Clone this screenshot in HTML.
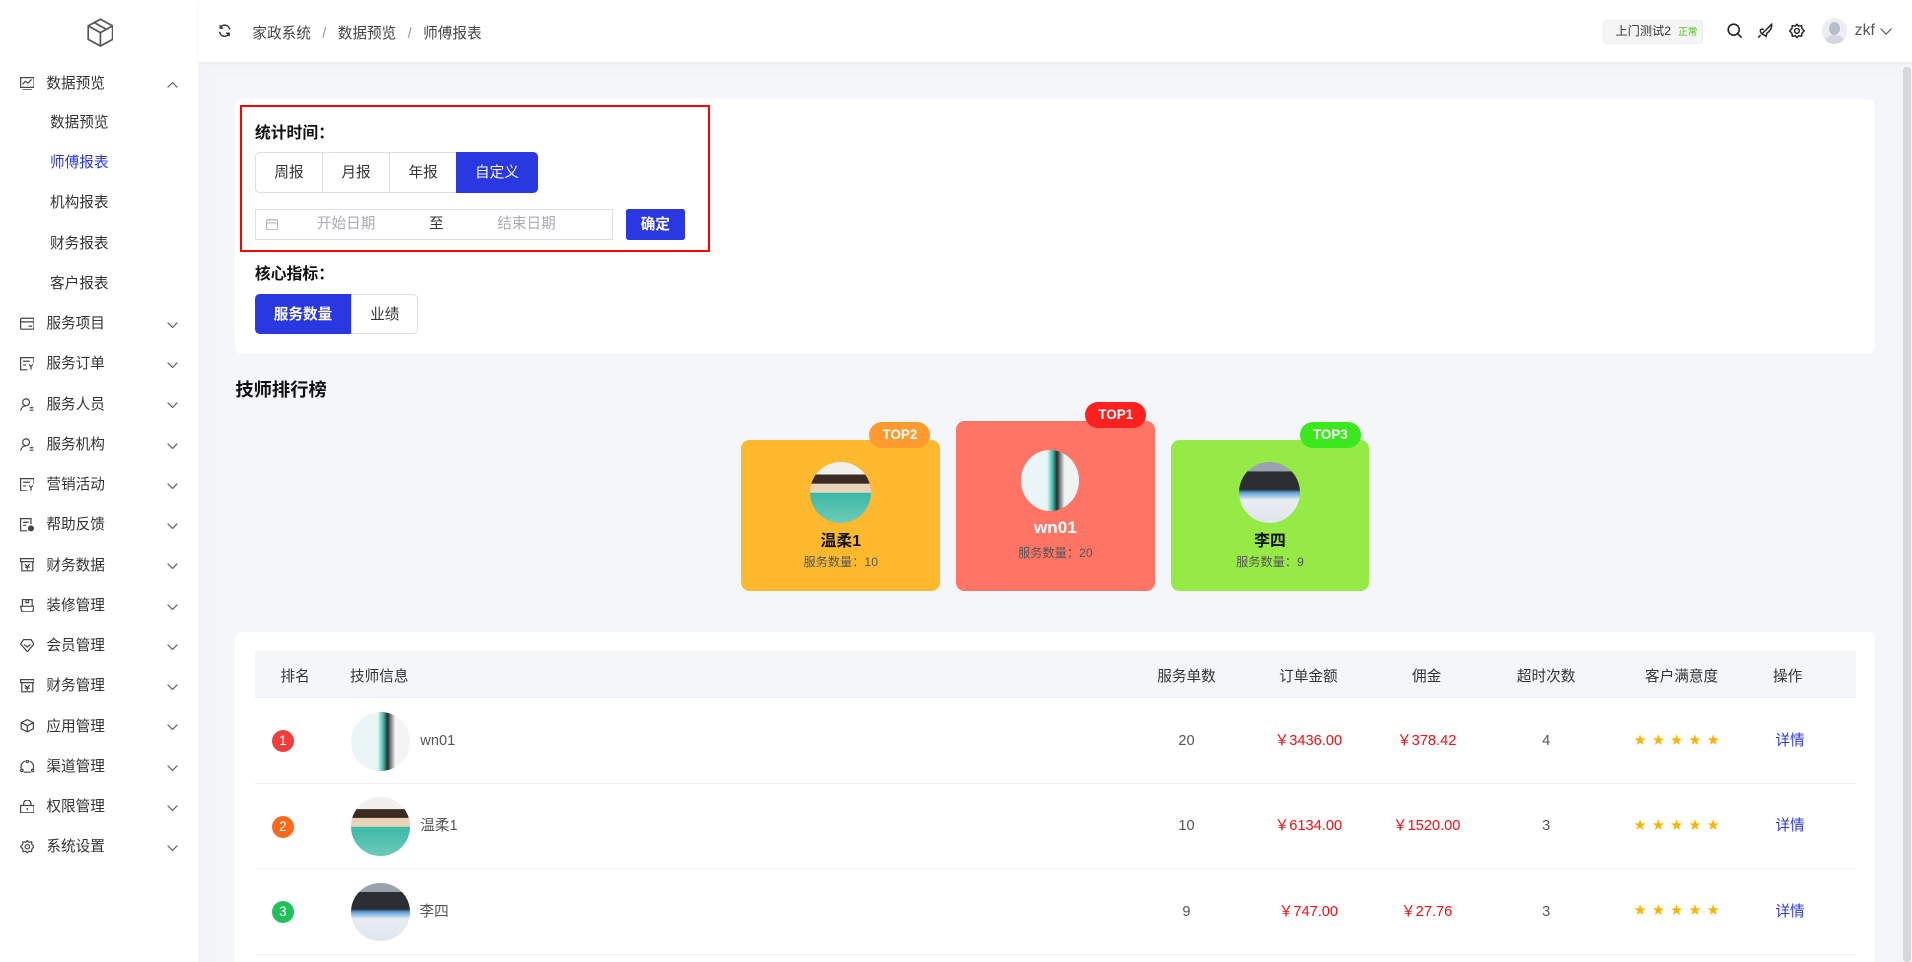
<!DOCTYPE html>
<html><head><meta charset="utf-8"><style>
html,body{margin:0;padding:0;}
html{width:1912px;height:962px;overflow:hidden;background:#f3f4f7;}
body{zoom:1.21939;width:1568px;height:789px;position:relative;font-family:"Liberation Sans","Noto Sans CJK SC",sans-serif;color:#333;font-size:13px;overflow:hidden;}
.a{position:absolute;}
.side{left:0;top:0;width:163px;height:789px;background:#fff;border-right:1px solid #eceef2;}
.mi{position:absolute;left:0;width:163px;height:20px;line-height:20px;font-size:12px;color:#333;}
.mi .ic{position:absolute;left:16px;top:4px;width:12px;height:11px;}
.mi .t{position:absolute;left:38px;}
.mi .ch{position:absolute;left:137px;top:8px;width:9px;height:5px;}
.sub{position:absolute;left:41px;font-size:12px;color:#333;line-height:20px;}
.hdr{left:163px;top:0;width:1405px;height:51px;background:#fff;box-shadow:0 1px 3px rgba(0,0,0,.06);}
.card{background:#fff;border-radius:6px;}
.btn{position:absolute;height:33px;line-height:33px;text-align:center;font-size:12px;border:1px solid #dcdfe6;box-sizing:border-box;background:#fff;color:#333;}
.blue{background:#2938e0;color:#fff;border-color:#2938e0;}
.rk{position:absolute;width:163px;border-radius:7px;text-align:center;}
.badge{position:absolute;width:50px;height:21px;border-radius:11px;color:#fff;font-size:11px;font-weight:bold;line-height:21px;text-align:center;}
.av{position:absolute;width:50px;height:50px;border-radius:50%;left:56px;overflow:hidden;}
.th{position:absolute;top:545px;font-size:12px;color:#333;transform:translateX(-50%);}
.td{position:absolute;font-size:12px;line-height:14px;height:14px;transform:translateX(-50%);white-space:nowrap;}
.red{color:#f20f0f;}
.num{position:absolute;left:223px;width:18px;height:18px;border-radius:50%;color:#fff;font-size:11px;line-height:18px;text-align:center;}
.tav{position:absolute;left:288px;width:48px;height:48px;border-radius:50%;overflow:hidden;}
.sep{position:absolute;left:209px;width:1313px;height:1px;background:#ebeef5;}
.stars{position:absolute;left:1340px;color:#f7b500;font-size:10px;line-height:14px;letter-spacing:5px;}
</style></head><body>
<div class="a side">
 <svg class="a" style="left:71px;top:15px" width="22" height="24" viewBox="0 0 22 24" fill="none" stroke="#555" stroke-width="1.4"><path d="M11 1 L21 6.5 V17.5 L11 23 L1 17.5 V6.5 Z M1 6.5 L11 12 L21 6.5 M11 12 V23 M6 3.8 L16 9.3"/></svg>
 <div class="mi" style="top:59px"><svg class="ic" viewBox="0 0 12 11" fill="none" stroke="#444"><rect x=".5" y=".5" width="11" height="8"/><path d="M2 6 L4.5 3.5 L6.5 5 L9.5 2 M2 10.5 H10"/></svg><span class="t">数据预览</span><svg class="ch" viewBox="0 0 9 5" fill="none" stroke="#666"><path d="M.5 4.5 L4.5 .5 L8.5 4.5"/></svg></div>
 <div class="sub" style="top:91px">数据预览</div>
 <div class="sub" style="top:124px;color:#2938e0">师傅报表</div>
 <div class="sub" style="top:157px">机构报表</div>
 <div class="sub" style="top:190px">财务报表</div>
 <div class="sub" style="top:223px">客户报表</div>
 <div class="mi" style="top:256px"><svg class="ic" viewBox="0 0 12 11" fill="none" stroke="#444"><rect x=".5" y="1" width="11" height="9" rx="1"/><path d="M.5 4 H11.5 M7 7.5 H10"/></svg><span class="t">服务项目</span><svg class="ch" viewBox="0 0 9 5" fill="none" stroke="#666"><path d="M.5 .5 L4.5 4.5 L8.5 .5"/></svg></div>
 <div class="mi" style="top:289px"><svg class="ic" viewBox="0 0 12 11" fill="none" stroke="#444"><path d="M11.5 5 V.5 H.5 V10.5 H6 M2.5 3.5 H8 M2.5 6.5 H5 M7.5 6 L9 8 L10.5 6 M9 8 V10.5"/></svg><span class="t">服务订单</span><svg class="ch" viewBox="0 0 9 5" fill="none" stroke="#666"><path d="M.5 .5 L4.5 4.5 L8.5 .5"/></svg></div>
 <div class="mi" style="top:322px"><svg class="ic" viewBox="0 0 12 11" fill="none" stroke="#444"><circle cx="5" cy="3.5" r="2.8"/><path d="M.5 10.5 C1 7.5 3 6.5 5 6.5 M8 8 H11 M8 10 H11"/></svg><span class="t">服务人员</span><svg class="ch" viewBox="0 0 9 5" fill="none" stroke="#666"><path d="M.5 .5 L4.5 4.5 L8.5 .5"/></svg></div>
 <div class="mi" style="top:355px"><svg class="ic" viewBox="0 0 12 11" fill="none" stroke="#444"><circle cx="5" cy="3.5" r="2.8"/><path d="M.5 10.5 C1 7.5 3 6.5 5 6.5 M8 8 H11 M8 10 H11"/></svg><span class="t">服务机构</span><svg class="ch" viewBox="0 0 9 5" fill="none" stroke="#666"><path d="M.5 .5 L4.5 4.5 L8.5 .5"/></svg></div>
 <div class="mi" style="top:388px"><svg class="ic" viewBox="0 0 12 11" fill="none" stroke="#444"><path d="M11.5 5 V.5 H.5 V10.5 H6 M2.5 3.5 H8 M2.5 6.5 H5 M7.5 6 L9 8 L10.5 6 M9 8 V10.5"/></svg><span class="t">营销活动</span><svg class="ch" viewBox="0 0 9 5" fill="none" stroke="#666"><path d="M.5 .5 L4.5 4.5 L8.5 .5"/></svg></div>
 <div class="mi" style="top:421px"><svg class="ic" viewBox="0 0 12 11" fill="none" stroke="#444"><path d="M9 5 V.5 H.5 V10.5 H6 M2.5 3.5 H7 M2.5 6 H5"/><circle cx="9" cy="8.5" r="2" fill="#444"/></svg><span class="t">帮助反馈</span><svg class="ch" viewBox="0 0 9 5" fill="none" stroke="#666"><path d="M.5 .5 L4.5 4.5 L8.5 .5"/></svg></div>
 <div class="mi" style="top:454px"><svg class="ic" viewBox="0 0 12 11" fill="none" stroke="#444"><path d="M.5 .5 H11.5 V3 H.5 Z M1.5 3 V10.5 H10.5 V3 M4 5 L6 7 L8 5 M6 7 V9.5 M4 7.5 H8"/></svg><span class="t">财务数据</span><svg class="ch" viewBox="0 0 9 5" fill="none" stroke="#666"><path d="M.5 .5 L4.5 4.5 L8.5 .5"/></svg></div>
 <div class="mi" style="top:487px"><svg class="ic" viewBox="0 0 12 11" fill="none" stroke="#444"><path d="M2 .5 H10 V6 H2 Z M.5 6 H11.5 L10.5 10.5 H1.5 Z M5 .5 V3 H7 V.5"/></svg><span class="t">装修管理</span><svg class="ch" viewBox="0 0 9 5" fill="none" stroke="#666"><path d="M.5 .5 L4.5 4.5 L8.5 .5"/></svg></div>
 <div class="mi" style="top:520px"><svg class="ic" viewBox="0 0 12 11" fill="none" stroke="#444"><path d="M3 .5 H9 L11.5 4 L6 10.5 L.5 4 Z M3.5 4.5 L6 6.5 L8.5 4.5"/></svg><span class="t">会员管理</span><svg class="ch" viewBox="0 0 9 5" fill="none" stroke="#666"><path d="M.5 .5 L4.5 4.5 L8.5 .5"/></svg></div>
 <div class="mi" style="top:553px"><svg class="ic" viewBox="0 0 12 11" fill="none" stroke="#444"><path d="M.5 .5 H11.5 V3 H.5 Z M1.5 3 V10.5 H10.5 V3 M4 5 L6 7 L8 5 M6 7 V9.5 M4 7.5 H8"/></svg><span class="t">财务管理</span><svg class="ch" viewBox="0 0 9 5" fill="none" stroke="#666"><path d="M.5 .5 L4.5 4.5 L8.5 .5"/></svg></div>
 <div class="mi" style="top:586px"><svg class="ic" viewBox="0 0 12 11" fill="none" stroke="#444"><path d="M6 .5 L11 3 V8 L6 10.5 L1 8 V3 Z M1 3 L6 5.5 L11 3 M6 5.5 V10.5"/></svg><span class="t">应用管理</span><svg class="ch" viewBox="0 0 9 5" fill="none" stroke="#666"><path d="M.5 .5 L4.5 4.5 L8.5 .5"/></svg></div>
 <div class="mi" style="top:619px"><svg class="ic" viewBox="0 0 12 11" fill="none" stroke="#444"><path d="M4 1 A5 5 0 0 0 1 7 M8 1 A5 5 0 0 1 11 7 M3 10 H9"/><circle cx="6" cy="1" r="1"/><circle cx="1.5" cy="8.5" r="1"/><circle cx="10.5" cy="8.5" r="1"/></svg><span class="t">渠道管理</span><svg class="ch" viewBox="0 0 9 5" fill="none" stroke="#666"><path d="M.5 .5 L4.5 4.5 L8.5 .5"/></svg></div>
 <div class="mi" style="top:652px"><svg class="ic" viewBox="0 0 12 11" fill="none" stroke="#444"><rect x=".5" y="4.5" width="11" height="6"/><path d="M3 4.5 V3 A3 3 0 0 1 9 3 V4.5 M6 6.5 V8.5"/></svg><span class="t">权限管理</span><svg class="ch" viewBox="0 0 9 5" fill="none" stroke="#666"><path d="M.5 .5 L4.5 4.5 L8.5 .5"/></svg></div>
 <div class="mi" style="top:685px"><svg class="ic" viewBox="0 0 12 11" fill="none" stroke="#444"><path d="M6 .5 L7.3 1.8 L9.5 1.5 L9.8 3.7 L11.5 5.5 L9.8 7.3 L9.5 9.5 L7.3 9.2 L6 10.5 L4.7 9.2 L2.5 9.5 L2.2 7.3 L.5 5.5 L2.2 3.7 L2.5 1.5 L4.7 1.8 Z"/><circle cx="6" cy="5.5" r="1.8"/></svg><span class="t">系统设置</span><svg class="ch" viewBox="0 0 9 5" fill="none" stroke="#666"><path d="M.5 .5 L4.5 4.5 L8.5 .5"/></svg></div>
</div>

<div class="a hdr">
 <svg class="a" style="left:16px;top:20px" width="11" height="11" viewBox="0 0 12 12" fill="none" stroke="#333" stroke-width="1.3"><path d="M10.5 5 A4.5 4.5 0 0 0 2 3.5 M1.5 7 A4.5 4.5 0 0 0 10 8.5 M2 1 V3.7 H4.7 M10 11 V8.3 H7.3"/></svg>
 <div class="a" style="left:44px;top:18px;font-size:12px;color:#444">家政系统 <span style="color:#999;margin:0 6px">/</span> 数据预览 <span style="color:#999;margin:0 6px">/</span> 师傅报表</div>
 <div class="a" style="left:1152px;top:16px;width:82px;height:20px;background:#f5f5f6;border:1px solid #ececec;border-radius:3px;font-size:10px;line-height:18px;box-sizing:border-box;padding-left:9px;color:#333">上门测试2 <span style="color:#52c41a;font-size:8px;margin-left:3px">正常</span></div>
 <svg class="a" style="left:1253px;top:19px" width="13" height="13" viewBox="0 0 13 13" fill="none" stroke="#222" stroke-width="1.3"><circle cx="5.5" cy="5.5" r="4.5"/><path d="M9 9 L12 12"/></svg>
 <svg class="a" style="left:1278px;top:19px" width="13" height="13" viewBox="0 0 13 13" fill="none" stroke="#222" stroke-width="1.2"><path d="M4 9 L12 1 Q12.5 5.5 8 8.5 L7.5 11 L6 10 Z M4 9 L3 7.5 Q2 5 4.5 5 L5.5 5.5 M3 10 L1 12"/></svg>
 <svg class="a" style="left:1304px;top:19px" width="13" height="13" viewBox="0 0 12 11" fill="none" stroke="#222" stroke-width="1.1"><path d="M6 .5 L7.3 1.8 L9.5 1.5 L9.8 3.7 L11.5 5.5 L9.8 7.3 L9.5 9.5 L7.3 9.2 L6 10.5 L4.7 9.2 L2.5 9.5 L2.2 7.3 L.5 5.5 L2.2 3.7 L2.5 1.5 L4.7 1.8 Z"/><circle cx="6" cy="5.5" r="1.8"/></svg>
 <div class="a" style="left:1331px;top:15px;width:21px;height:21px;border-radius:50%;background:#eceef3;overflow:hidden"><div class="a" style="left:6px;top:3px;width:9px;height:11px;border-radius:50%;background:#b9bdc8"></div><div class="a" style="left:3px;top:14px;width:15px;height:10px;border-radius:50%;background:#d4d7df"></div></div>
 <div class="a" style="left:1358px;top:18px;font-size:13px;line-height:15px;color:#555">zkf</div>
 <svg class="a" style="left:1379px;top:23px" width="10" height="6" viewBox="0 0 10 6" fill="none" stroke="#666"><path d="M.5 .5 L5 5 L9.5 .5"/></svg>
</div>
<div class="a" style="left:1561px;top:55px;width:6px;height:734px;background:#d6d7d9;border-radius:3px"></div>
<div class="a" style="left:177px;top:64px;width:1378px;height:725px;background:#f5f6f9"></div>

<div class="a card" style="left:193px;top:81px;width:1345px;height:209px"></div>
<div class="a" style="left:197px;top:86px;width:382px;height:117px;border:2px solid #f00"></div>
<div class="a" style="left:209px;top:98px;font-size:13px;font-weight:bold;color:#111">统计时间：</div>
<div class="btn" style="left:209px;top:125px;width:56px;border-radius:4px 0 0 4px">周报</div>
<div class="btn" style="left:264px;top:125px;width:56px">月报</div>
<div class="btn" style="left:319px;top:125px;width:56px">年报</div>
<div class="btn blue" style="left:374px;top:125px;width:67px;border-radius:0 4px 4px 0">自定义</div>
<div class="a" style="left:209px;top:171px;width:294px;height:26px;border:1px solid #dcdfe6;box-sizing:border-box;background:#fff;font-size:12px;line-height:24px">
 <svg class="a" style="left:8px;top:7px" width="10" height="10" viewBox="0 0 10 10" fill="none" stroke="#bbb"><rect x=".5" y="1.5" width="9" height="8"/><path d="M.5 4 H9.5 M3 .5 V2.5 M7 .5 V2.5"/></svg>
 <span class="a" style="left:50px;color:#a8abb2">开始日期</span><span class="a" style="left:142px;color:#333">至</span><span class="a" style="left:198px;color:#a8abb2">结束日期</span></div>
<div class="btn blue" style="left:513px;top:171px;width:49px;height:26px;line-height:26px;border-radius:2px;font-weight:bold">确定</div>
<div class="a" style="left:209px;top:214px;font-size:13px;font-weight:bold;color:#111">核心指标：</div>
<div class="btn blue" style="left:209px;top:241px;width:79px;border-radius:4px 0 0 4px;font-weight:bold">服务数量</div>
<div class="btn" style="left:288px;top:241px;width:55px;border-radius:0 4px 4px 0">业绩</div>

<div class="a" style="left:193px;top:308px;font-size:15px;font-weight:bold;color:#111">技师排行榜</div>

<div class="rk" style="left:608px;top:361px;height:124px;background:#ffb92e">
 <div class="av" style="top:18px;background:linear-gradient(180deg,#f2f0ec 0 20%,#3a2c24 21% 35%,#e8d2b8 36% 50%,#3cb8a6 51%,#6fcab8 100%)"></div>
 <div class="a" style="left:0;width:163px;top:72px;font-size:13px;font-weight:bold;color:#111">温柔1</div>
 <div class="a" style="left:0;width:163px;top:92px;font-size:10px;color:#555">服务数量：10</div>
</div>
<div class="badge" style="left:713px;top:346px;background:#ff9a2e">TOP2</div>
<div class="rk" style="left:784px;top:345px;height:140px;background:#ff7565">
 <div class="av" style="top:24px;width:48px;height:50px;left:53px;background:linear-gradient(90deg,#e9f5f6 0 45%,#3cb8a6 55%,#2b2b2b 62%,#f0f3f3 75%)"></div>
 <div class="a" style="left:0;width:163px;top:80px;font-size:14px;font-weight:bold;color:#fff">wn01</div>
 <div class="a" style="left:0;width:163px;top:100px;font-size:10px;color:#555">服务数量：20</div>
</div>
<div class="badge" style="left:890px;top:330px;background:#ff2020">TOP1</div>
<div class="rk" style="left:960px;top:361px;height:124px;background:#95ea45">
 <div class="av" style="top:18px;background:linear-gradient(180deg,#9aa2ad 0 15%,#2b2f34 16% 45%,#5a9fd8 50%,#e9edf2 62%,#dfe5ee 100%)"></div>
 <div class="a" style="left:0;width:163px;top:72px;font-size:13px;font-weight:bold;color:#111">李四</div>
 <div class="a" style="left:0;width:163px;top:92px;font-size:10px;color:#555">服务数量：9</div>
</div>
<div class="badge" style="left:1066px;top:346px;background:#3ae81d">TOP3</div>

<div class="a card" style="left:193px;top:518px;width:1345px;height:280px"></div>
<div class="a" style="left:209px;top:534px;width:1313px;height:38px;background:#f5f6f8;border-bottom:1px solid #ebeef5"></div>
<div class="th" style="left:242px">排名</div>
<div class="th" style="left:311px">技师信息</div>
<div class="th" style="left:973px">服务单数</div>
<div class="th" style="left:1073px">订单金额</div>
<div class="th" style="left:1170px">佣金</div>
<div class="th" style="left:1268px">超时次数</div>
<div class="th" style="left:1379px">客户满意度</div>
<div class="th" style="left:1466px">操作</div>

<div class="num" style="top:599px;background:#ef3e3e">1</div>
<div class="tav" style="top:584px;background:linear-gradient(90deg,#eaf6f6 0 45%,#3cb8a6 55%,#2b2b2b 62%,#f3f4f4 75%)"></div>
<div class="td" style="left:359px;top:601px;color:#555">wn01</div>
<div class="td" style="left:973px;top:601px;color:#555">20</div>
<div class="td red" style="left:1073px;top:601px">￥3436.00</div>
<div class="td red" style="left:1170px;top:601px">￥378.42</div>
<div class="td" style="left:1268px;top:601px;color:#555">4</div>
<div class="stars" style="top:600px">★★★★★</div>
<div class="td" style="left:1468px;top:601px;color:#2938e0">详情</div>
<div class="sep" style="top:642px"></div>

<div class="num" style="top:669px;background:#fb6a1c">2</div>
<div class="tav" style="top:654px;background:linear-gradient(180deg,#f2f0ec 0 20%,#3a2c24 21% 35%,#e8d2b8 36% 50%,#3cb8a6 51%,#6fcab8 100%)"></div>
<div class="td" style="left:360px;top:671px;color:#555">温柔1</div>
<div class="td" style="left:973px;top:671px;color:#555">10</div>
<div class="td red" style="left:1073px;top:671px">￥6134.00</div>
<div class="td red" style="left:1170px;top:671px">￥1520.00</div>
<div class="td" style="left:1268px;top:671px;color:#555">3</div>
<div class="stars" style="top:670px">★★★★★</div>
<div class="td" style="left:1468px;top:671px;color:#2938e0">详情</div>
<div class="sep" style="top:712px"></div>

<div class="num" style="top:739px;background:#1fc15a">3</div>
<div class="tav" style="top:724px;background:linear-gradient(180deg,#9aa2ad 0 15%,#2b2f34 16% 45%,#5a9fd8 50%,#e9edf2 62%,#dfe5ee 100%)"></div>
<div class="td" style="left:356px;top:741px;color:#555">李四</div>
<div class="td" style="left:973px;top:741px;color:#555">9</div>
<div class="td red" style="left:1073px;top:741px">￥747.00</div>
<div class="td red" style="left:1170px;top:741px">￥27.76</div>
<div class="td" style="left:1268px;top:741px;color:#555">3</div>
<div class="stars" style="top:740px">★★★★★</div>
<div class="td" style="left:1468px;top:741px;color:#2938e0">详情</div>
<div class="sep" style="top:782px"></div>
</body></html>
